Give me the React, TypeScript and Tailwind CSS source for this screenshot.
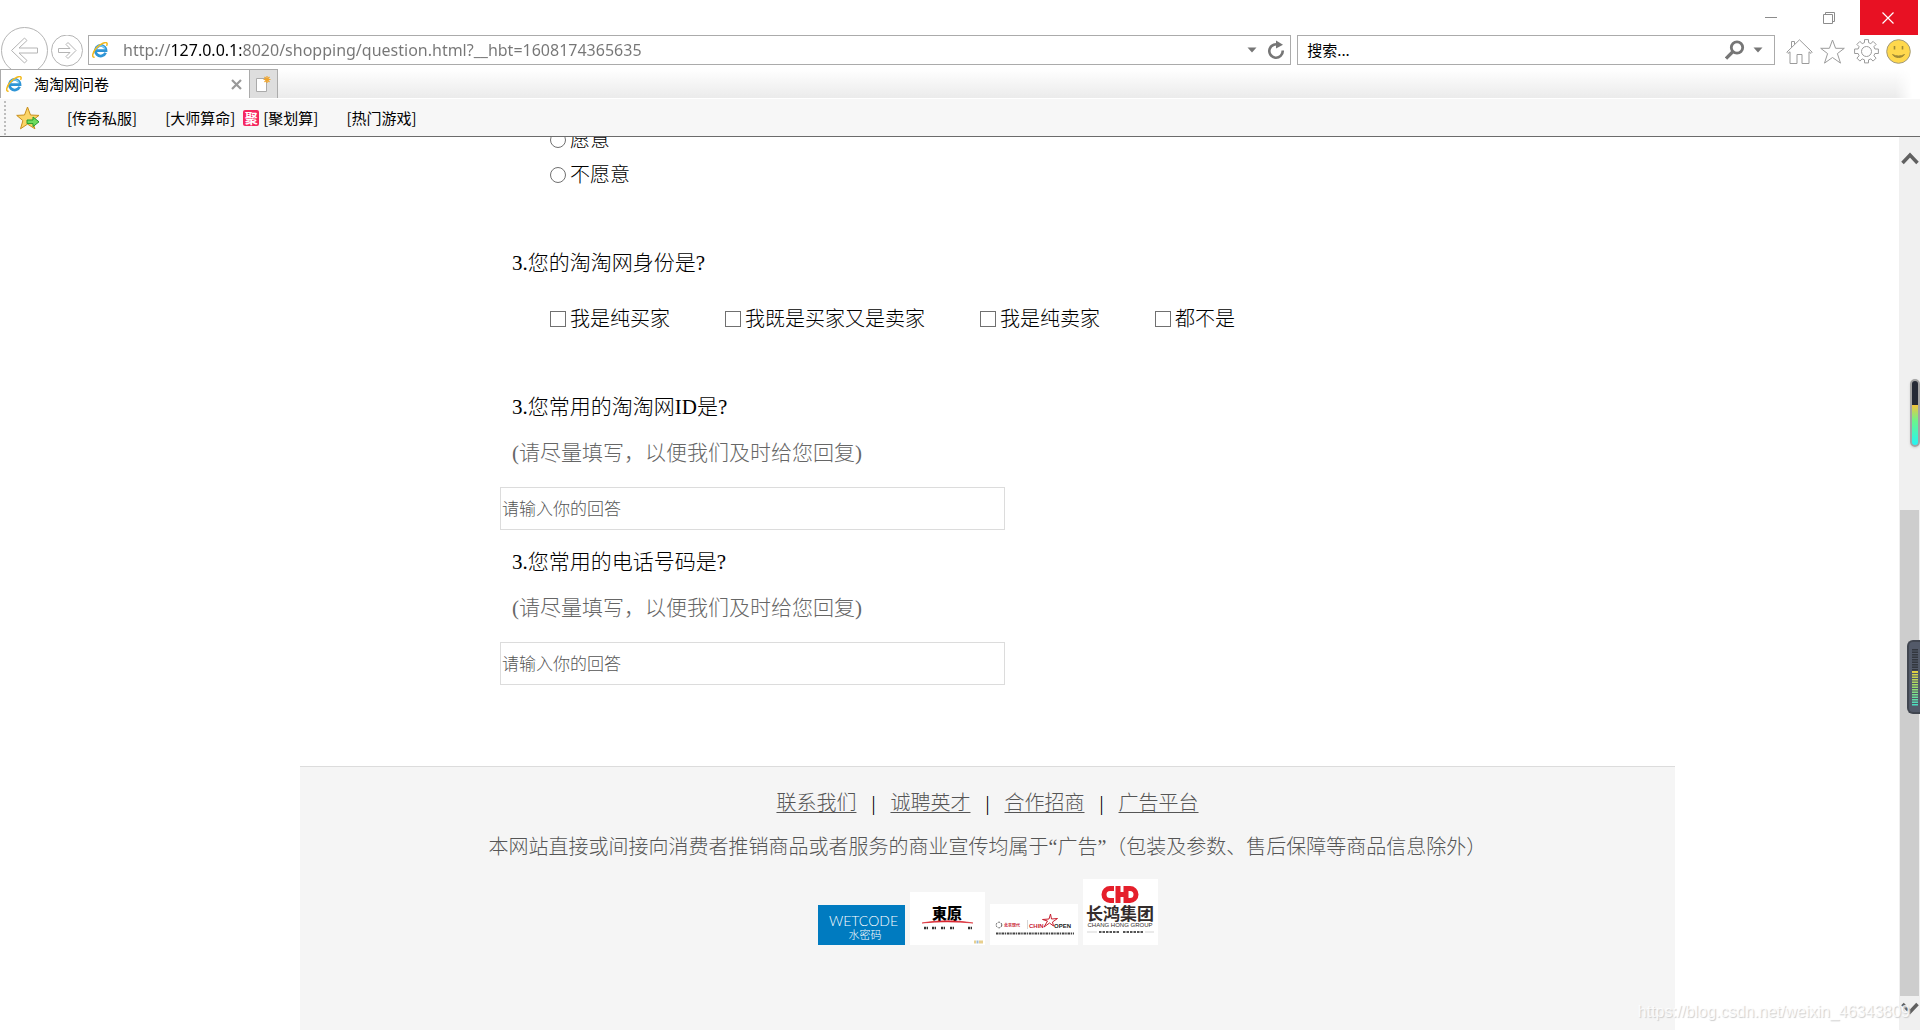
import React, { useState } from 'react';

interface TextQuestionProps {
  id: string;
  title: string;
}

const identityOptions = ['我是纯买家', '我既是买家又是卖家', '我是纯卖家', '都不是'];
const footerLinks = ['联系我们', '诚聘英才', '合作招商', '广告平台'];

const IeIcon: React.FC = () => (
  <svg className="size-4 shrink-0" viewBox="0 0 16 16" fill="none">
    <path d="M13.6 10.8A5.3 5.3 0 1 1 14 8.700H4.600" stroke="#2f95d6" strokeWidth="2.800" />
    <path d="M13 7.400A4.600 4.600 0 0 0 4 7.600" stroke="#7fcdf2" strokeWidth="1.200" />
    <path d="M2.600 15.200C-.6 15.600.4 10.400 4.600 5.800 8.600 1.400 14.200-.6 15 1.300c.3.700 0 1.700-.5 2.600" stroke="#f2b91d" strokeWidth="1.500" />
  </svg>
);

const Caret: React.FC = () => (
  <svg className="h-[6px] w-[10px]" viewBox="0 0 10 6">
    <path d="M.5.500h9L5 5.500z" fill="#767676" />
  </svg>
);

const TitleBar: React.FC = () => (
  <div className="flex h-[35px] justify-end pr-[2px]">
    <button aria-label="最小化" className="flex w-[58px] items-center justify-center pr-1">
      <svg className="size-3" viewBox="0 0 12 12"><path d="M0 5.500h12" stroke="#8c8c8c" /></svg>
    </button>
    <button aria-label="还原" className="flex w-[58px] items-center justify-center pr-1">
      <svg className="size-3" viewBox="0 0 12 12" fill="none" stroke="#8c8c8c">
        <path d="M.5 2.500h9v9h-9zM2.500 2.500v-2h9v9h-2" />
      </svg>
    </button>
    <button aria-label="关闭" className="flex w-[58px] items-center justify-center bg-[#e81123] pr-[2px]">
      <svg className="size-3" viewBox="0 0 12 12"><path d="M.5.500l11 11M11.500.500l-11 11" stroke="#fff" strokeWidth="1.200" /></svg>
    </button>
  </div>
);

const NavBar: React.FC = () => {
  const [url, setUrl] = useState('http://127.0.0.1:8020/shopping/question.html?__hbt=1608174365635');

  return (
    <div className="flex h-[34px] items-start pr-[9px]">
      <button aria-label="后退" className="-mt-2 ml-px h-[42px] w-[48px] overflow-hidden">
        <svg className="h-[48px] w-[48px]" viewBox="0 0 48 48" fill="none" stroke="#b4b4b4">
          <circle cx="23.500" cy="23.500" r="23" />
          <path d="M10.500 23.500l13-12.500 2.500 2.500-8 7.500h18.500v5H18l8 7.500-2.500 2.500z" />
        </svg>
      </button>
      <button aria-label="前进" className="ml-[2px] size-8">
        <svg className="size-8" viewBox="0 0 32 32" fill="none" stroke="#b4b4b4">
          <circle cx="16" cy="15.500" r="15.500" />
          <path d="M25 15.500l-8 8-2-2 4-4H7.500v-4H19l-4-4 2-2z" />
        </svg>
      </button>
      <div className="ml-[5px] flex h-[30px] flex-1 items-center border border-[#ababab] pr-[5px] pl-[3px]">
        <IeIcon />
        {/* the host part of the address is drawn darker than the rest */}
        <input
          aria-label="地址"
          value={url}
          onChange={(e) => setUrl(e.target.value)}
          className="ml-[15px] min-w-0 flex-1 bg-[linear-gradient(to_right,#767676_48px,#000_48px,#000_118px,#767676_118px)] bg-clip-text font-['Noto_Sans',sans-serif] text-[16px] leading-6 text-transparent outline-none"
        />
        <button aria-label="历史记录" className="px-[5px]"><Caret /></button>
        <button aria-label="刷新" className="ml-[5px]">
          <svg className="h-[20px] w-[18px]" viewBox="0 0 18 20" fill="none">
            <path d="M12.500 5.300A6.700 6.700 0 1 0 15.700 10.500" stroke="#767676" strokeWidth="2.600" />
            <path d="M9 .5l7 4.300-7 3.700z" fill="#767676" />
          </svg>
        </button>
      </div>
      <div className="ml-[6px] flex h-[30px] w-1/4 items-center border border-[#ababab] pr-[11px] pl-[9px]">
        <input
          aria-label="搜索"
          placeholder="搜索..."
          className="min-w-0 flex-1 font-['Noto_Sans_CJK_SC',sans-serif] text-[15px] outline-none placeholder:text-black"
        />
        <button aria-label="开始搜索">
          <svg className="size-5" viewBox="0 0 20 20" fill="none" stroke="#767676">
            <circle cx="12" cy="7.500" r="5.700" strokeWidth="2.800" />
            <path d="M8 11.500l-7 7" strokeWidth="3.200" />
          </svg>
        </button>
        <button aria-label="搜索选项" className="ml-2"><Caret /></button>
      </div>
      <div className="ml-[11px] flex items-center gap-[7px] pt-[4px]">
        <button aria-label="主页">
          <svg className="h-[25px] w-[27px]" viewBox="0 0 27 25" fill="none" stroke="#9b9b9b">
            <path d="M13.500.800L.8 13.200l1.200 1.200 2-1.600v11.700h7v-9h5v9h7V12.800l2 1.600 1.200-1.200zM5.500 8.400V2.500h3v3" />
          </svg>
        </button>
        <button aria-label="收藏夹">
          <svg className="size-[25px]" viewBox="0 0 25 25" fill="none" stroke="#9b9b9b">
            <path d="M12.500 1l3.100 8.300h8.700l-6.900 5.300 3.100 9.500-8-5.600-8 5.600 3.100-9.500L.7 9.300h8.700z" />
          </svg>
        </button>
        <button aria-label="工具" className="ml-[2px]">
          <svg className="size-[25px]" viewBox="0 0 25 25" fill="none" stroke="#9b9b9b">
            <path d="M10.500.600h4v3l2.300 1 2.300-2.200 3 3-2.200 2.300 1 2.300h3.500v4.500h-3.500l-1 2.300 2.200 2.300-3 3-2.300-2.200-2.300 1v3h-4v-3l-2.300-1-2.300 2.200-3-3 2.200-2.300-1-2.300H.6V10h3.500l1-2.300-2.200-2.300 3-3 2.300 2.200 2.300-1z" />
            <circle cx="12.500" cy="12.500" r="5" />
          </svg>
        </button>
        <button aria-label="反馈">
          <svg className="size-[25px]" viewBox="0 0 25 25" fill="none">
            <circle cx="12.500" cy="12.500" r="11.800" fill="#ffd84d" stroke="#a39a78" />
            <path d="M8.500 7v3.500M16.500 7v3.500" stroke="#a08a35" strokeWidth="1.600" />
            <path d="M6.500 15.500c2.500 4 9.500 4 12 0-3.500 2-8.500 2-12 0z" fill="#a08a35" stroke="#a08a35" />
          </svg>
        </button>
      </div>
    </div>
  );
};

const TabBar: React.FC = () => (
  <div className="flex h-[29px]">
    <div className="flex w-[249px] items-center border-t border-l border-[#ababab] pr-[7px] pl-[5px] text-[15px] leading-5">
      <IeIcon />
      <span className="ml-3 flex-1">淘淘网问卷</span>
      <button aria-label="关闭标签页">
        <svg className="size-[11px]" viewBox="0 0 11 11"><path d="M1 1l9 9M10 1l-9 9" stroke="#999" strokeWidth="2.200" /></svg>
      </button>
    </div>
    <button aria-label="新建标签页" className="flex w-[29px] items-center justify-center border border-b-0 border-[#ababab] bg-[#dedede]">
      <svg className="h-4 w-[15px]" viewBox="0 0 15 16" fill="none">
        <path d="M.5 2.500h10v13H.5z" fill="#fff" stroke="#aaa" />
        <path d="M11 0v7M7.500 3.500h7M8.500 1l5 5M13.500 1l-5 5" stroke="#f0a52c" strokeWidth="1.200" />
      </svg>
    </button>
    <div className="mr-[8px] flex-1 bg-linear-to-b from-white to-[#ebebeb] [mask-image:linear-gradient(to_right,#000_99%,transparent)]" />
  </div>
);

const BookmarkBar: React.FC = () => (
  <nav className="mt-px flex h-[38px] items-center border-b border-[#6b6b6b] bg-[#f7f7f7] text-[15px] leading-5">
    <div className="ml-1 h-[34px] border-l-2 border-dotted border-[#bdbdbd]" />
    <button aria-label="添加到收藏夹栏" className="ml-[10px]">
      <svg className="size-6" viewBox="0 0 24 24">
        <path d="M11.500 1l3 8 8.500.400-6.700 5.200 2.600 8.200-7.400-4.700-7 4.700 2.400-8.200L.7 9.400 8.500 9z" fill="#fbd567" stroke="#c98f1c" />
        <path d="M11 14h6v-3l6 4.800-6 4.800v-3h-6z" fill="#6edb5e" stroke="#259b2c" />
      </svg>
    </button>
    <a href="#" className="ml-[27px]">[传奇私服]</a>
    <a href="#" className="ml-7">[大师算命]</a>
    <a href="#" className="ml-2 flex items-center gap-1">
      <span className="flex size-4 items-center justify-center rounded-xs bg-[#f5275f] text-[13px] leading-4 font-bold text-white">聚</span>
      [聚划算]
    </a>
    <a href="#" className="ml-7">[热门游戏]</a>
  </nav>
);

const TextQuestion: React.FC<TextQuestionProps> = ({ id, title }) => (
  <div className="mb-4">
    <label htmlFor={id} className="block pl-3 text-[21px] leading-8">{title}</label>
    <p className="mt-3.5 pl-3 text-[21px] leading-8 text-[#666]">(请尽量填写，以便我们及时给您回复)</p>
    <input
      id={id}
      type="text"
      placeholder="请输入你的回答"
      className="mt-[18px] h-[43px] w-[505px] border border-[#dcdcdc] px-px pb-[2px] font-['Noto_Sans_CJK_SC',sans-serif] text-[17px] placeholder:text-[#555]"
    />
  </div>
);

const Survey: React.FC = () => (
  <form className="ml-[500px] text-[20px]">
    <div className="-mt-[15px] flex flex-col pl-[50px]">
      {['愿意', '不愿意'].map((option) => (
        <label key={option} className="flex h-[35px] items-center gap-1">
          <input type="radio" name="willing" className="size-4 appearance-none rounded-full border border-[#707070]" />
          {option}
        </label>
      ))}
    </div>

    <fieldset className="mt-[55px]">
      <legend className="pl-3 text-[21px] leading-8">3.您的淘淘网身份是?</legend>
      <div className="mt-6 flex gap-[55px] pl-[50px] leading-8">
        {identityOptions.map((option) => (
          <label key={option} className="flex items-center gap-1">
            <input type="checkbox" className="size-4 appearance-none border border-[#707070]" />
            {option}
          </label>
        ))}
      </div>
    </fieldset>

    <div className="mt-14">
      <TextQuestion id="taotao-id" title="3.您常用的淘淘网ID是?" />
      <TextQuestion id="phone" title="3.您常用的电话号码是?" />
    </div>
  </form>
);

const PartnerLogos: React.FC = () => (
  <div className="mt-4 flex items-end justify-center gap-[5px]">
    <svg className="h-10 w-[87px]" viewBox="0 0 87 40" fill="#fff" textAnchor="middle">
      <path d="M0 0h87v40H0z" fill="#007bc0" />
      <text x="45.500" y="21" fontFamily="Lato, sans-serif" fontSize="14">WETCODE</text>
      <text x="47" y="34" fontFamily="Noto Sans CJK SC, sans-serif" fontSize="11">水密码</text>
    </svg>
    <svg className="h-[53px] w-[75px]" viewBox="0 0 75 53" textAnchor="middle">
      <path d="M0 0h75v53H0z" fill="#fff" />
      <text x="37" y="27" fontFamily="Noto Sans CJK TC, sans-serif" fontSize="15" fontWeight="900">東原</text>
      <path d="M12 31C28 28 46 28 63 31 46 29.500 28 29.500 12 31z" fill="#d9232e" stroke="#d9232e" strokeWidth=".6" />
      <path d="M14 36h4M22 36h4M31 36h4M40 36h4M58 36h4" stroke="#333" strokeWidth="2.500" strokeDasharray="2 .6" />
      <path d="M64 50h2M69 50h4" stroke="#e8cf8e" strokeWidth="3" />
      <path d="M66.500 50h2" stroke="#9dbbd6" strokeWidth="3" />
    </svg>
    <svg className="h-[41px] w-[88px]" viewBox="0 0 88 41">
      <path d="M0 0h88v41H0z" fill="#fff" />
      <circle cx="9" cy="21" r="2.800" fill="none" stroke="#555" strokeDasharray="2 1" />
      <text x="14" y="22.500" fontFamily="Noto Sans CJK SC, sans-serif" fontSize="4" fontWeight="700" fill="#c8202f">北京现代</text>
      <path d="M37.500 16v9" stroke="#aaa" strokeWidth=".5" />
      <text x="39" y="23.500" fontFamily="Liberation Sans, sans-serif" fontSize="6" fontWeight="700" fill="#c8202f">CHIN</text>
      <path d="M54 23l3.500-6-5-1.500 6.500-.5 1.500-5 1 5 6-.5-5 3.500 1 4-4-3z" fill="none" stroke="#c8202f" />
      <text x="64" y="23.500" fontFamily="Liberation Sans, sans-serif" fontSize="6" fontWeight="700" fill="#222">OPEN</text>
      <path d="M6 29.500h78" stroke="#444" strokeWidth="2" strokeDasharray="2.500 .7 1.500 .8" />
    </svg>
    <svg className="h-[66px] w-[75px]" viewBox="0 0 75 66" textAnchor="middle">
      <path d="M0 0h75v66H0z" fill="#fff" />
      <path d="M31 9.500h-4a6 6 0 0 0 0 12h4M35 7v17M35 15.500h9M43 9.500h4a6 6 0 0 1 0 12h-4z" fill="none" stroke="#e51f2b" strokeWidth="5" />
      <text x="37" y="41" fontFamily="Noto Sans CJK SC, sans-serif" fontSize="17" fontWeight="700" fill="#332c2b">长鸿集团</text>
      <text x="37" y="48" fontFamily="Liberation Sans, sans-serif" fontSize="6" fill="#332c2b">CHANG HONG GROUP</text>
      <path d="M16 53h20M40 53h20" stroke="#555" strokeWidth="2" strokeDasharray="2.500 1" />
      <path d="M4 53h10M62 53h9" stroke="#bbb" strokeWidth=".6" />
    </svg>
  </div>
);

const Footer: React.FC = () => (
  <footer className="mt-[65px] mr-[224px] ml-[300px] flex-1 border-t border-[#dcdcdc] bg-[#f5f5f5] pt-5 text-center text-[20px] leading-8 text-[#555]">
    <div className="flex justify-center gap-[15px]">
      {footerLinks.map((link, index) => (
        <React.Fragment key={link}>
          {index > 0 && <span className="text-black">|</span>}
          <a href="#" className="underline decoration-1 underline-offset-2">{link}</a>
        </React.Fragment>
      ))}
    </div>
    <p className="mt-3 [text-spacing-trim:space-all]">本网站直接或间接向消费者推销商品或者服务的商业宣传均属于“广告”（包装及参数、售后保障等商品信息除外）</p>
    <PartnerLogos />
  </footer>
);

const ScrollBar: React.FC = () => (
  <div className="flex w-[21px] flex-col bg-[#f0f0f0] pl-px">
    <button aria-label="向上滚动" className="flex h-[42px] items-center justify-center">
      <svg className="h-[13px] w-[18px]" viewBox="0 0 18 13"><path d="M1.500 11L9 3l7.500 8" fill="none" stroke="#606060" strokeWidth="3.500" /></svg>
    </button>
    <div className="flex-[331]" />
    <div className="mr-px flex-[486] bg-[#cdcdcd]" />
    <button aria-label="向下滚动" className="flex h-[34px] items-start justify-center pt-[6px]">
      <svg className="h-[13px] w-[18px]" viewBox="0 0 18 13"><path d="M1.500 2L9 10l7.500-8" fill="none" stroke="#606060" strokeWidth="3.500" /></svg>
    </button>
  </div>
);

const App: React.FC = () => (
  <div className="relative flex h-screen flex-col overflow-hidden bg-white font-['Noto_Sans_CJK_SC',sans-serif] text-black">
    <header>
      <TitleBar />
      <NavBar />
      <TabBar />
      <BookmarkBar />
    </header>
    <div className="flex min-h-0 flex-1">
      <main className="flex min-w-0 flex-1 flex-col overflow-hidden font-['Liberation_Serif','Noto_Sans_CJK_SC',serif] font-light">
        <Survey />
        <Footer />
      </main>
      <ScrollBar />
    </div>

    {/* desktop widgets floating over the window edge */}
    <div className="absolute top-[379px] right-0 h-[68px] w-[10px] rounded-full border-2 border-[#a3a3a3] bg-[linear-gradient(to_bottom,#252a36_38%,#f2c53d_38%,#6df58a_62%,#22f5f5)] shadow" />
    <div className="absolute top-[640px] right-0 flex h-[74px] w-[13px] items-center rounded-l-md border-2 border-r-0 border-[#414650] bg-[#535a69] pl-[3px]">
      <svg className="h-[57px] w-[6px]" viewBox="0 0 6 57" fill="none" strokeWidth="6">
        <defs>
          <linearGradient id="meter" x1="0" y1="22" x2="0" y2="57" gradientUnits="userSpaceOnUse">
            <stop stopColor="#e3cf3f" />
            <stop offset=".5" stopColor="#93e070" />
            <stop offset="1" stopColor="#45dcc5" />
          </linearGradient>
        </defs>
        <path d="M3 0V22" stroke="#33373f" strokeDasharray="1.500 1" />
        <path d="M0 22h6v35H0z" fill="url(#meter)" />
        <path d="M3 24V57" stroke="#535a69" strokeDasharray="1 1.500" />
      </svg>
    </div>
    <span className="pointer-events-none absolute right-[10px] bottom-1.5 font-['Liberation_Sans',sans-serif] text-[16px] leading-6 text-white/80 [text-shadow:1px_1px_1px_#ccc]">
      https://blog.csdn.net/weixin_46343809
    </span>
  </div>
);

export default App;
